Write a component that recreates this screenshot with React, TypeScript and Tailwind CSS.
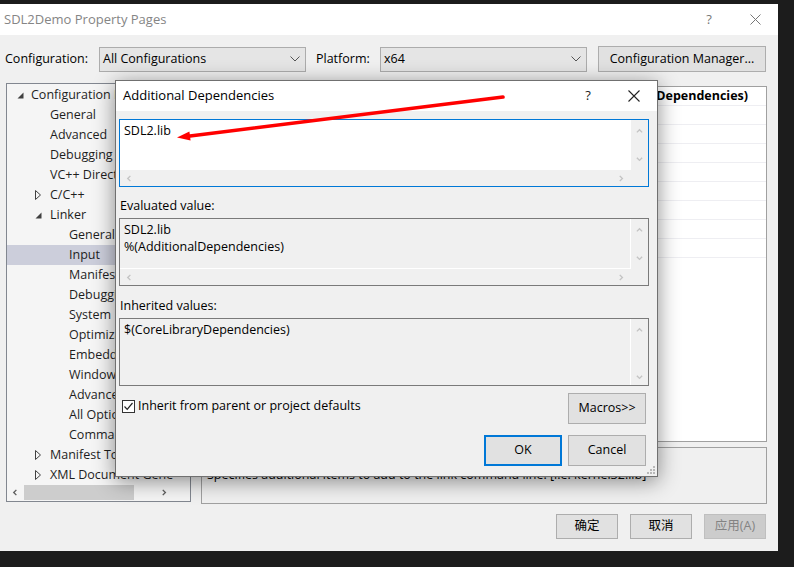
import React from "react";

const Chev = ({ dir, color = "#c4c4c4", size = 7 }: { dir: "up" | "down" | "left" | "right"; color?: string; size?: number }) => {
  const pts: Record<string, string> = {
    up: "1,5 4,2 7,5",
    down: "1,2 4,5 7,2",
    left: "5,1 2,4 5,7",
    right: "2,1 5,4 2,7",
  };
  return (
    <svg width={size} height={size} viewBox="0 0 8 8" className="block">
      <polyline points={pts[dir]} fill="none" stroke={color} strokeWidth="1.6" />
    </svg>
  );
};

const SelectChevron = () => (
  <svg width="10" height="6" viewBox="0 0 10 6" className="block">
    <polyline points="0.5,0.5 5,5 9.5,0.5" fill="none" stroke="#555" strokeWidth="1" />
  </svg>
);

const Expanded = () => (
  <svg width="7" height="7" viewBox="0 0 7 7" className="block">
    <polygon points="6.5,0.5 6.5,6.5 0.5,6.5" fill="#404040" />
  </svg>
);

const Collapsed = () => (
  <svg width="6" height="10" viewBox="0 0 6 10" className="block">
    <polygon points="0.5,0.5 5.5,5 0.5,9.5" fill="none" stroke="#404040" strokeWidth="1" />
  </svg>
);

type TreeItem = { t: string; lvl: 0 | 1 | 2; exp?: "open" | "closed"; sel?: boolean };

const tree: TreeItem[] = [
  { t: "Configuration Properties", lvl: 0, exp: "open" },
  { t: "General", lvl: 1 },
  { t: "Advanced", lvl: 1 },
  { t: "Debugging", lvl: 1 },
  { t: "VC++ Directories", lvl: 1 },
  { t: "C/C++", lvl: 1, exp: "closed" },
  { t: "Linker", lvl: 1, exp: "open" },
  { t: "General", lvl: 2 },
  { t: "Input", lvl: 2, sel: true },
  { t: "Manifest File", lvl: 2 },
  { t: "Debugging", lvl: 2 },
  { t: "System", lvl: 2 },
  { t: "Optimization", lvl: 2 },
  { t: "Embedded IDL", lvl: 2 },
  { t: "Windows Metadata", lvl: 2 },
  { t: "Advanced", lvl: 2 },
  { t: "All Options", lvl: 2 },
  { t: "Command Line", lvl: 2 },
  { t: "Manifest Tool", lvl: 1, exp: "closed" },
  { t: "XML Document Generator", lvl: 1, exp: "closed" },
];

const indent: Record<number, string> = {
  0: "w-[24px] pl-[10px]",
  1: "w-[43px] pl-[28px]",
  2: "w-[62px] pl-[47px]",
};

const gridRows = [
  ["Additional Dependencies", "SDL2.lib;%(AdditionalDependencies)"],
  ["Ignore All Default Libraries", ""],
  ["Ignore Specific Default Libraries", ""],
  ["Module Definition File", ""],
  ["Add Module to Assembly", ""],
  ["Embed Managed Resource File", ""],
  ["Force Symbol References", ""],
  ["Delay Loaded Dlls", ""],
  ["Assembly Link Resource", ""],
];

const WinButton = ({ children, className = "" }: { children: React.ReactNode; className?: string }) => (
  <div className={`flex items-center justify-center bg-[#e1e1e1] border border-[#adadad] text-black ${className}`}>{children}</div>
);

const MultiBox = ({
  lines,
  active,
  hscroll,
}: {
  lines: string[];
  active?: boolean;
  hscroll?: boolean;
}) => (
  <div
    className={`h-[68px] border grid grid-cols-[1fr_17px] ${hscroll ? "grid-rows-[1fr_16px]" : "grid-rows-[1fr]"} ${
      active ? "border-[#0078d7] bg-[#f0f0f0]" : "border-[#7a7a7a] bg-[#f0f0f0]"
    }`}
  >
    <div
      className={`pl-[4px] pt-[2px] leading-[17px] ${
        active ? "bg-white" : `border-r border-white ${hscroll ? "border-b" : ""}`
      }`}
    >
      {lines.map((l, i) => (
        <div key={i}>{l}</div>
      ))}
    </div>
    <div className={`flex flex-col items-center justify-between pt-[8px] ${hscroll ? "pb-[7px]" : "pb-[4px]"}`}>
      <Chev dir="up" />
      <Chev dir="down" />
    </div>
    {hscroll && (
      <>
        <div className="flex items-center justify-between px-[6px]">
          <Chev dir="left" />
          <Chev dir="right" />
        </div>
        <div />
      </>
    )}
  </div>
);

export default function App() {
  return (
    <div className="relative w-[794px] h-[567px] overflow-hidden bg-[#1c1c1c] pt-[4px] font-['Open_Sans','Noto_Sans_CJK_SC',sans-serif] text-[12.5px] text-black">
      {/* Main window */}
      <div className="w-[778px] h-[547px] bg-[#f0f0f0] flex flex-col">
        {/* Title bar */}
        <div className="h-[31px] bg-white flex items-center pl-[4px] shrink-0">
          <span className="text-[13px] text-[#858585]">SDL2Demo Property Pages</span>
          <div className="ml-auto flex">
            <div className="w-[46px] flex justify-center text-[13px] text-[#777]">?</div>
            <div className="w-[46px] flex justify-center items-center">
              <svg width="11" height="11" viewBox="0 0 11 11">
                <path d="M0.5,0.5 L10.5,10.5 M10.5,0.5 L0.5,10.5" stroke="#777" strokeWidth="1" />
              </svg>
            </div>
          </div>
        </div>

        {/* Config row */}
        <div className="mt-[11px] h-[26px] flex items-center pl-[5px] shrink-0">
          <div className="w-[94px]">Configuration:</div>
          <div className="w-[207px] h-[25px] bg-[#e5e5e5] border border-[#acacac] flex items-center pl-[3px] pr-[5px]">
            <span>All Configurations</span>
            <span className="ml-auto">
              <SelectChevron />
            </span>
          </div>
          <div className="ml-[10px] w-[64px]">Platform:</div>
          <div className="w-[207px] h-[25px] bg-[#e5e5e5] border border-[#acacac] flex items-center pl-[3px] pr-[5px]">
            <span>x64</span>
            <span className="ml-auto">
              <SelectChevron />
            </span>
          </div>
          <WinButton className="ml-[11px] w-[168px] h-[26px]">Configuration Manager...</WinButton>
        </div>

        {/* Main area */}
        <div className="mt-[11px] flex items-start pl-[6px] h-[421px] shrink-0">
          {/* Tree */}
          <div className="w-[185px] h-[419px] border border-[#828790] bg-[#f5f5f5] flex flex-col">
            <div className="flex-1 flex overflow-hidden">
              <div className="flex-1 overflow-hidden pt-[1px]">
                {tree.map((it, i) => (
                  <div
                    key={i}
                    className={`h-[20px] flex items-center whitespace-nowrap ${it.sel ? "bg-[#cccedb]" : ""}`}
                  >
                    <div className={`${indent[it.lvl]} shrink-0 flex items-center`}>
                      {it.exp === "open" && <Expanded />}
                      {it.exp === "closed" && <Collapsed />}
                    </div>
                    <span className="text-[#1e1e1e]">{it.t}</span>
                  </div>
                ))}
              </div>
              <div className="w-[17px] flex flex-col justify-end items-center pb-[6px]">
                <Chev dir="down" color="#606060" />
              </div>
            </div>
            <div className="h-[17px] flex shrink-0">
              <div className="flex-1 flex items-center">
                <div className="w-[17px] flex justify-center">
                  <Chev dir="left" color="#606060" />
                </div>
                <div className="flex-1 h-full flex items-center">
                  <div className="w-[110px] h-[15px] bg-[#cdcdcd]" />
                </div>
                <div className="w-[17px] flex justify-center">
                  <Chev dir="right" color="#606060" />
                </div>
              </div>
              <div className="w-[17px]" />
            </div>
          </div>

          {/* Right column */}
          <div className="ml-[10px] w-[566px] flex flex-col">
            <div className="mt-[3px] h-[356px] border border-[#a0a0a0] bg-white overflow-hidden">
              {gridRows.map(([n, v], i) => (
                <div key={i} className="h-[19px] border-b border-[#eeeef2] flex items-center whitespace-nowrap">
                  <div className="w-[290px] pl-[20px] text-[#1e1e1e]">{n}</div>
                  <div className="flex-1 text-right pr-[18px] font-bold text-black">{v}</div>
                </div>
              ))}
            </div>
            <div className="mt-[5px] h-[57px] border border-[#a0a0a0] bg-[#f0f0f0] pt-[3px] pl-[5px] whitespace-nowrap">
              <div className="h-[16px] leading-[16px] font-bold">Additional Dependencies</div>
              <div className="h-[16px] leading-[16px]">
                Specifies additional items to add to the link command line. [i.e. kernel32.lib]
              </div>
            </div>
          </div>
        </div>

        {/* Bottom buttons */}
        <div className="mt-[10px] flex justify-end pr-[12px] gap-[12px]">
          <WinButton className="w-[62px] h-[25px]">确定</WinButton>
          <WinButton className="w-[62px] h-[25px]">取消</WinButton>
          <div className="w-[62px] h-[25px] flex items-center justify-center bg-[#cccccc] border border-[#bfbfbf] text-[#838383]">
            应用(A)
          </div>
        </div>
      </div>

      {/* Dialog */}
      <div className="absolute left-[115px] top-[80px] w-[543px] h-[397px] border border-[#707070] bg-[#f0f0f0] flex flex-col shadow-[0_4px_20px_rgba(0,0,0,0.45)]">
        <div className="h-[30px] bg-white flex items-center pl-[7px] shrink-0">
          <span className="text-[13px]">Additional Dependencies</span>
          <div className="ml-auto flex">
            <div className="w-[46px] flex justify-center text-[13px] text-[#222]">?</div>
            <div className="w-[46px] flex justify-center items-center">
              <svg width="12" height="12" viewBox="0 0 12 12">
                <path d="M0.5,0.5 L11.5,11.5 M11.5,0.5 L0.5,11.5" stroke="#222" strokeWidth="1.1" />
              </svg>
            </div>
          </div>
        </div>
        <div className="flex-1 flex flex-col pl-[3px] pr-[8px] pt-[8px]">
          <MultiBox lines={["SDL2.lib"]} active hscroll />
          <div className="mt-[9px] h-[20px] flex items-center pl-[1px]">Evaluated value:</div>
          <div className="mt-[2px]">
            <MultiBox lines={["SDL2.lib", "%(AdditionalDependencies)"]} hscroll />
          </div>
          <div className="mt-[10px] h-[20px] flex items-center pl-[1px]">Inherited values:</div>
          <div className="mt-[2px]">
            <MultiBox lines={["$(CoreLibraryDependencies)"]} />
          </div>
          <div className="mt-[7px] flex items-start">
            <div className="mt-[4px] ml-[3px] flex items-center">
              <div className="w-[13px] h-[13px] border border-[#333] bg-white flex items-center justify-center">
                <svg width="11" height="11" viewBox="0 0 11 11">
                  <polyline points="1.5,5.5 4.2,8.3 9.5,2" fill="none" stroke="#222" strokeWidth="1.2" />
                </svg>
              </div>
              <span className="ml-[3px]">Inherit from parent or project defaults</span>
            </div>
            <WinButton className="ml-auto mr-[3px] w-[78px] h-[31px]">Macros&gt;&gt;</WinButton>
          </div>
          <div className="mt-[11px] flex justify-end gap-[6px] mr-[3px]">
            <div className="w-[78px] h-[31px] flex items-center justify-center bg-[#e1e1e1] border-2 border-[#0078d7]">
              OK
            </div>
            <WinButton className="w-[78px] h-[31px]">Cancel</WinButton>
          </div>
        </div>
        <svg width="10" height="10" viewBox="0 0 10 10" className="absolute right-[1px] bottom-[1px]">
          <rect x="7" y="1" width="2" height="2" fill="#b8b8b8" />
          <rect x="4" y="4" width="2" height="2" fill="#b8b8b8" />
          <rect x="7" y="4" width="2" height="2" fill="#b8b8b8" />
          <rect x="1" y="7" width="2" height="2" fill="#b8b8b8" />
          <rect x="4" y="7" width="2" height="2" fill="#b8b8b8" />
          <rect x="7" y="7" width="2" height="2" fill="#b8b8b8" />
        </svg>
      </div>

      {/* Red annotation arrow */}
      <svg width="794" height="567" viewBox="0 0 794 567" className="absolute left-0 top-0 pointer-events-none">
        <line x1="503" y1="97" x2="188" y2="136.2" stroke="#ff0000" strokeWidth="3.6" strokeLinecap="round" />
        <polygon points="177,137.6 190.6,140.6 189.4,131.4" fill="#ff0000" />
      </svg>
    </div>
  );
}
